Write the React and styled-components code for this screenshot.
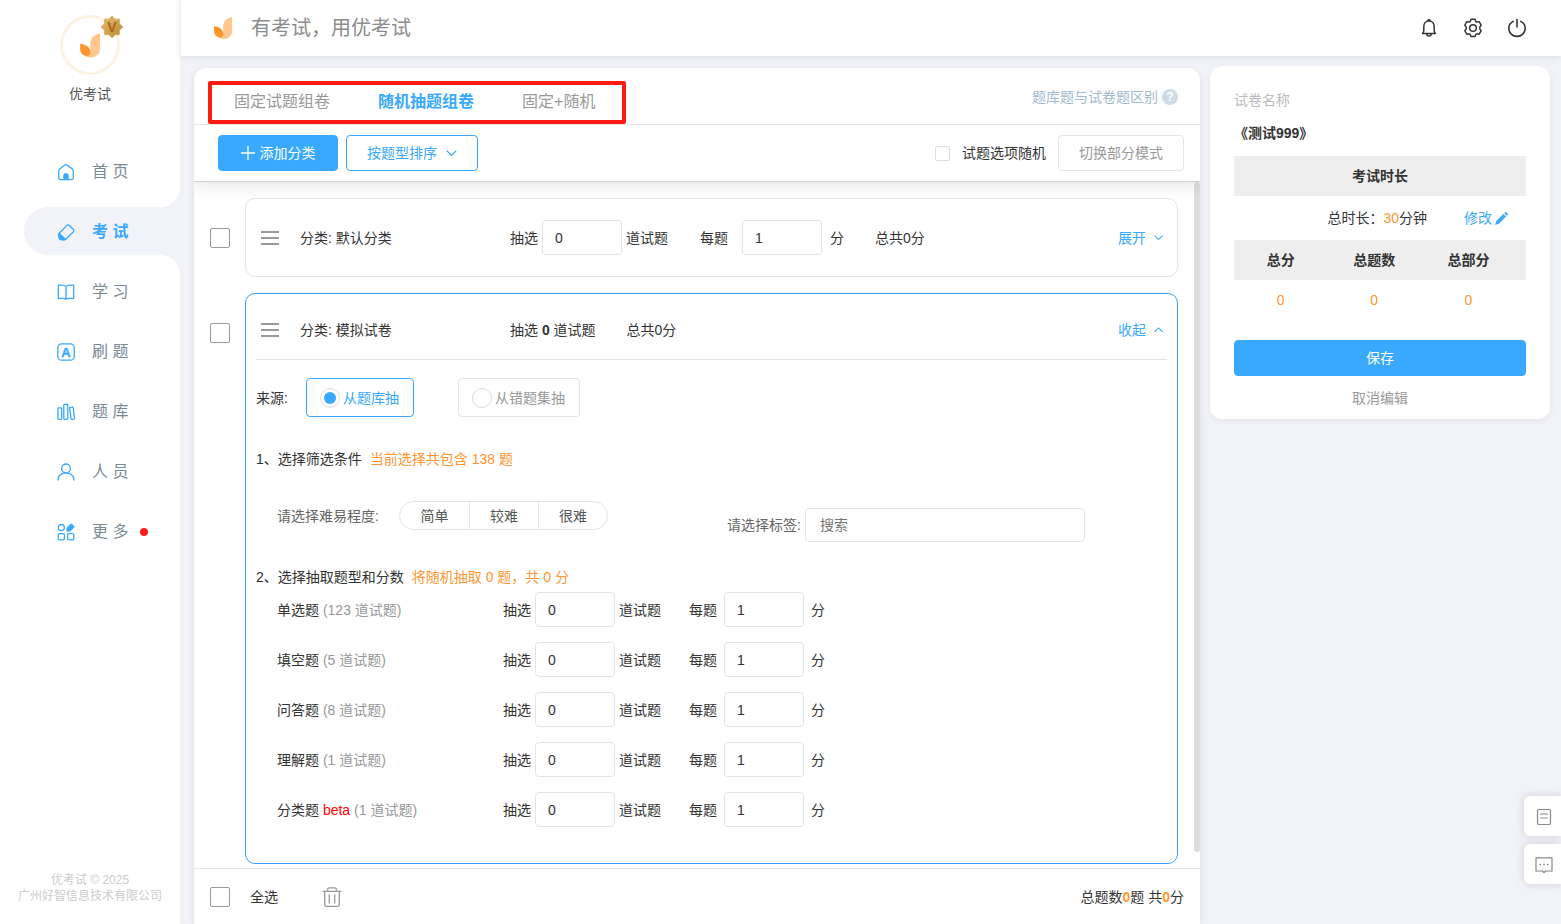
import { useState } from "react";
import styled, { createGlobalStyle, css } from "styled-components";

const GlobalStyle = createGlobalStyle`
  * {
    box-sizing: border-box;
  }

  body {
    margin: 0;
    background-color: #f2f3f8;
    color: #333;
    font-family: "Liberation Sans", "Noto Sans CJK SC", sans-serif;
    font-size: 14px;
    line-height: 20px;
  }

  button,
  input {
    font: inherit;
  }

  button {
    padding: 0;
    border: 0;
    background: none;
    cursor: pointer;
  }

  a {
    text-decoration: none;
  }

  svg {
    display: block;
    flex-shrink: 0;
  }
`;

const Page = styled.div`
  display: grid;
  grid-template-columns: 180px minmax(0, 1fr);
  height: 100vh;
`;

/* sidebar */

const Sidebar = styled.aside`
  display: flex;
  flex-direction: column;
  background-color: #fff;
`;

const Profile = styled.div`
  display: flex;
  flex-direction: column;
  align-items: center;
  gap: 9px;
  padding-top: 15px;
  color: #555;
`;

const Avatar = styled.div`
  position: relative;
  display: flex;
  align-items: center;
  justify-content: center;
  width: 60px;
  height: 60px;
  border: 3px solid #fbf3e4;
  border-radius: 50%;
`;

const Badge = styled.div`
  position: absolute;
  top: -3px;
  right: -7px;
`;

const Nav = styled.nav`
  display: flex;
  flex-direction: column;
  gap: 12px;
  margin-top: 43px;
`;

const NavItem = styled.a`
  position: relative;
  display: flex;
  align-items: center;
  gap: 17px;
  height: 48px;
  margin-left: 24px;
  padding: 2px 0 0 33px;
  border-radius: 24px 0 0 24px;
  color: #7b8a99;
  font-size: 16px;

  ${({ $active }) =>
    $active &&
    css`
      background-color: #f2f3f8;
      color: #38a9ff;
      font-weight: 700;

      &::before,
      &::after {
        content: "";
        position: absolute;
        right: 0;
        width: 20px;
        height: 20px;
      }

      &::before {
        bottom: 100%;
        background: radial-gradient(circle at 0 0, #fff 20px, #f2f3f8 20px);
      }

      &::after {
        top: 100%;
        background: radial-gradient(circle at 0 100%, #fff 20px, #f2f3f8 20px);
      }
    `}
`;

const NavIcon = styled.span`
  color: #38a9ff;
`;

const Dot = styled.span`
  width: 8px;
  height: 8px;
  margin-left: -5px;
  border-radius: 50%;
  background-color: #ff1a1a;
`;

const Copyright = styled.footer`
  margin-top: auto;
  padding-bottom: 20px;
  color: #ccc;
  font-size: 12px;
  line-height: 16px;
  text-align: center;
`;

/* top bar */

const Main = styled.div`
  display: flex;
  flex-direction: column;
  min-height: 0;
`;

const Header = styled.header`
  display: flex;
  align-items: center;
  height: 56px;
  flex-shrink: 0;
  padding: 0 34px 0 32px;
  border-left: 1px solid #ebecf2;
  background-color: #fff;
  box-shadow: 0 1px 6px rgba(60, 60, 100, 0.12);
`;

const Slogan = styled.h1`
  flex: 1;
  margin: 0 0 0 18px;
  color: #8c8c8c;
  font-size: 20px;
  font-weight: 400;
  line-height: 28px;
`;

const HeaderActions = styled.div`
  display: flex;
  gap: 24px;
`;

const IconButton = styled.button`
  display: flex;
  align-items: center;
  justify-content: center;
  color: ${({ $muted }) => ($muted ? "#999" : "#333")};
`;

const Content = styled.main`
  display: grid;
  grid-template-columns: minmax(0, 1fr) 340px;
  gap: 10px;
  flex: 1;
  min-height: 0;
  padding: 12px 11px 0 14px;
`;

/* question panel */

const Panel = styled.section`
  display: flex;
  flex-direction: column;
  min-height: 0;
  border-radius: 12px 12px 0 0;
  background-color: #fff;
  box-shadow: 0 2px 6px rgba(60, 60, 100, 0.12);
`;

const TabBar = styled.div`
  display: flex;
  align-items: flex-end;
  justify-content: space-between;
  height: 57px;
  flex-shrink: 0;
  padding: 0 22px 0 14px;
  border-bottom: 1px solid #e4e4e4;
`;

const Tabs = styled.div`
  display: flex;
  align-items: center;
  gap: 48px;
  height: 43px;
  padding: 0 27px 2px 22px;
  border: 4px solid #ff1a12;
  border-radius: 2px;
`;

const Tab = styled.button`
  color: ${({ $active }) => ($active ? "#38a9ff" : "#999")};
  font-size: 16px;
  font-weight: ${({ $active }) => ($active ? 700 : 400)};
`;

const HelpLink = styled.a`
  display: flex;
  align-items: center;
  gap: 4px;
  margin-bottom: 17px;
  color: #a1bad0;
`;

const Toolbar = styled.div`
  position: relative;
  display: flex;
  align-items: center;
  gap: 8px;
  height: 57px;
  flex-shrink: 0;
  padding: 0 16px 0 24px;
  border-bottom: 1px solid #d2d2d2;
  box-shadow: 0 4px 14px rgba(0, 0, 0, 0.1);
  clip-path: inset(0 0 -20px 0);
`;

const buttonColors = {
  primary: css`
    border-color: #38a9ff;
    background-color: #38a9ff;
    color: #fff;
  `,
  outline: css`
    border-color: #38a9ff;
    color: #38a9ff;
  `,
  plain: css`
    border-color: #e4e4e4;
    color: #999;
  `,
};

const Button = styled.button`
  display: flex;
  align-items: center;
  justify-content: center;
  gap: ${({ $gap }) => $gap || 0}px;
  width: ${({ $width }) => $width || "auto"};
  height: 36px;
  padding: 0 20px;
  border: 1px solid;
  border-radius: 4px;
  white-space: nowrap;
  ${({ $kind }) => buttonColors[$kind]}
`;

const RandomOption = styled.label`
  display: flex;
  align-items: center;
  gap: 12px;
  margin: 0 4px 0 auto;
`;

const Checkbox = styled.input.attrs({ type: "checkbox" })`
  appearance: none;
  width: ${({ $small }) => ($small ? 15 : 20)}px;
  height: ${({ $small }) => ($small ? 15 : 20)}px;
  flex-shrink: 0;
  margin: 0;
  border: 1px solid ${({ $small }) => ($small ? "#ddd" : "#999")};
  border-radius: 2px;
  background-color: #fff;

  &:checked {
    border-color: #38a9ff;
    background-color: #38a9ff;
  }
`;

const ListArea = styled.div`
  display: grid;
  grid-template-columns: minmax(0, 1fr) 6px;
  flex: 1;
  min-height: 0;
`;

const List = styled.div`
  display: flex;
  flex-direction: column;
  gap: 16px;
  overflow-y: auto;
  scrollbar-width: none;
  padding: 16px 16px 0;
`;

const ScrollThumb = styled.div`
  margin-bottom: 16px;
  border-radius: 3px;
  background-color: #dcdde0;
`;

const Entry = styled.div`
  display: grid;
  grid-template-columns: 20px minmax(0, 1fr);
  gap: 15px;

  > input {
    margin-top: 30px;
  }
`;

const Card = styled.div`
  padding: 0 10px;
  border: 1px solid ${({ $open }) => ($open ? "#38a1f3" : "#e4e4e4")};
  border-radius: 10px;
`;

const CardHeader = styled.div`
  display: flex;
  align-items: center;
  height: ${({ $open }) => ($open ? 66 : 77)}px;
  padding: ${({ $open }) => ($open ? "7px 4px 0 5px" : "0 4px 0 5px")};
  border-bottom: ${({ $open }) => ($open ? "1px solid #e4e4e4" : "0")};
`;

const CardName = styled.div`
  width: 210px;
  margin-left: 21px;
`;

const Summary = styled.div`
  display: flex;
  gap: 31px;
`;

const CardTotal = styled.span`
  margin-left: 31px;
`;

const Toggle = styled.button`
  display: flex;
  align-items: center;
  gap: 8px;
  margin-left: auto;
  color: #38a9ff;
`;

const FieldGroup = styled.label`
  display: flex;
  align-items: center;
  gap: ${({ $gap }) => $gap}px;
  margin-right: ${({ $after }) => $after}px;
`;

const NumberInput = styled.input`
  width: 80px;
  height: 35px;
  padding: 0 12px;
  border: 1px solid #e4e4e4;
  border-radius: 4px;
  background-color: #fff;
  color: #333;
`;

const SourceRow = styled.div`
  display: flex;
  align-items: center;
  margin-top: 18px;
`;

const SourceOptions = styled.div`
  display: flex;
  gap: 44px;
  margin-left: 18px;
`;

const SourceOption = styled.label`
  display: flex;
  align-items: center;
  gap: 3px;
  height: 39px;
  padding: 0 14px 0 13px;
  border: 1px solid ${({ $active }) => ($active ? "#38a9ff" : "#e4e4e4")};
  border-radius: 4px;
  color: ${({ $active }) => ($active ? "#38a9ff" : "#999")};
`;

const Radio = styled.input.attrs({ type: "radio" })`
  appearance: none;
  display: grid;
  place-content: center;
  width: 20px;
  height: 20px;
  margin: 0;
  border: 1px solid #ddd;
  border-radius: 50%;

  &:checked::before {
    content: "";
    width: 12px;
    height: 12px;
    border-radius: 50%;
    background-color: #38a9ff;
  }
`;

const StepTitle = styled.h2`
  margin: ${({ $top }) => $top}px 0 0;
  font-size: 14px;
  font-weight: 400;
  line-height: 20px;
`;

const Note = styled.span`
  margin-left: 8px;
  color: #ff9632;
`;

const Filters = styled.div`
  display: flex;
  align-items: flex-start;
  margin-top: 32px;
  padding-left: 21px;
  color: #666;
`;

const Difficulty = styled.div`
  display: flex;
  align-items: center;
  gap: 20px;
  width: 450px;
`;

const Segments = styled.div`
  display: flex;
  border: 1px solid #e4e4e4;
  border-radius: 15px;
`;

const Segment = styled.button`
  width: 69px;
  height: 27px;
  color: #555;

  & + & {
    border-left: 1px solid #e4e4e4;
  }
`;

const TagField = styled.label`
  display: flex;
  align-items: center;
  gap: 4px;
  margin-top: 7px;
`;

const TagInput = styled.input`
  width: 280px;
  height: 34px;
  padding: 0 14px;
  border: 1px solid #e4e4e4;
  border-radius: 4px;

  &::placeholder {
    color: #757575;
  }
`;

const TypeList = styled.div`
  display: flex;
  flex-direction: column;
  gap: 15px;
  margin-top: 5px;
  padding: 0 0 36px 21px;
`;

const TypeRow = styled.div`
  display: flex;
  align-items: center;
`;

const TypeName = styled.div`
  width: 226px;
`;

const Count = styled.span`
  color: #999;
`;

const Beta = styled.span`
  color: #f00;
`;

const PanelFooter = styled.footer`
  display: flex;
  align-items: center;
  height: 56px;
  flex-shrink: 0;
  padding: 0 16px;
  border-top: 1px solid #e4e4e4;
`;

const SelectAll = styled.label`
  display: flex;
  align-items: center;
  gap: 20px;
  margin-right: 44px;
`;

const Totals = styled.div`
  margin-left: auto;
`;

const Highlight = styled.span`
  color: #ff9632;
  font-weight: ${({ $bold }) => ($bold ? 700 : 400)};
`;

/* paper info */

const PaperCard = styled.aside`
  align-self: start;
  margin-top: -2px;
  padding: 24px 24px 11px;
  border-radius: 12px;
  background-color: #fff;
  box-shadow: 0 2px 6px rgba(60, 60, 100, 0.08);
`;

const Caption = styled.div`
  color: #bbb;
`;

const PaperName = styled.div`
  margin: 13px 0;
  font-weight: 700;
`;

const BlockTitle = styled.div`
  background-color: #eee;
  font-weight: 700;
  line-height: 40px;
  text-align: center;
`;

const Duration = styled.div`
  display: flex;
  align-items: center;
  justify-content: flex-end;
  gap: 37px;
  height: 44px;
  padding-right: 18px;
`;

const EditLink = styled.button`
  display: flex;
  align-items: center;
  gap: 3px;
  color: #38a9ff;
`;

const Stats = styled.table`
  width: 100%;
  table-layout: fixed;
  border-collapse: collapse;

  th,
  td {
    height: 40px;
    padding: 0;
    text-align: center;
  }

  th {
    background-color: #eee;
  }

  td {
    color: #ff9632;
  }

  th:last-child,
  td:last-child {
    width: 36%;
    padding-right: 10px;
  }
`;

const SaveButton = styled(Button)`
  width: 100%;
  margin: 20px 0 12px;
`;

const CancelButton = styled.button`
  width: 100%;
  color: #999;
  line-height: 20px;
`;

const FloatingTools = styled.div`
  position: fixed;
  right: 0;
  bottom: 40px;
  display: flex;
  flex-direction: column;
  gap: 8px;
`;

const FloatingButton = styled.button`
  display: flex;
  align-items: center;
  justify-content: center;
  width: 37px;
  height: 40px;
  padding: 2px 0 0 3px;
  border-radius: 6px 0 0 6px;
  background-color: #fff;
  color: #888;
  box-shadow: 0 0 10px rgba(0, 0, 0, 0.15);
`;

/* icons */

const Logo = ({ width = 20, height = 24 }) => (
  <svg width={width} height={height} viewBox="0 0 20 24">
    <path
      d="M19.2 1C13.6 2 10.3 5 10.3 10.2V17.5L4.6 20.6C6 22.2 8 23 10.3 23C15.5 23 19.2 19.6 19.2 14.5Z"
      fill="#ffc68e"
    />
    <path
      d="M1 10.3C6.6 10.6 10.4 14.2 10.4 18.2C10.4 20.2 9 21.4 7 21.4C3.4 21.4 1 18.6 1 14.8Z"
      fill="#ff962a"
    />
  </svg>
);

const Medal = () => (
  <svg width="24" height="24" viewBox="0 0 24 24">
    <defs>
      <linearGradient id="gold" x1="0" y1="0" x2="1" y2="1">
        <stop offset="0" stopColor="#e6bf7c" />
        <stop offset="1" stopColor="#bb842c" />
      </linearGradient>
    </defs>
    <path
      d="M12 1L15 4.2L19.6 4L19.6 8.8L23 12L19.6 15.2L19.6 19.8L15 19.8L12 23L9 19.8L4.4 19.8L4.4 15.2L1 12L4.4 8.8L4.4 4L9 4.2Z"
      fill="url(#gold)"
      stroke="#dcb66e"
    />
    <text
      x="12"
      y="17"
      textAnchor="middle"
      fontSize="14"
      fontWeight="700"
      fill="#a8660c"
    >
      V
    </text>
  </svg>
);

const LineIcon = ({ size = 18, children, stroke = 1.3 }) => (
  <svg
    width={size}
    height={size}
    viewBox={`0 0 ${size} ${size}`}
    fill="none"
    stroke="currentColor"
    strokeWidth={stroke}
    strokeLinecap="round"
    strokeLinejoin="round"
  >
    {children}
  </svg>
);

const navIcons = {
  home: (
    <>
      <path d="M1.7 8C1.7 7.1 2 6.5 2.7 5.9L7.8 2.1C8.5 1.6 9.3 1.6 10 2.1L15.3 5.9C16 6.5 16.3 7.1 16.3 8V14.8C16.3 16 15.7 16.6 14.5 16.6H3.5C2.3 16.6 1.7 16 1.7 14.8Z" />
      <path
        d="M6.3 16.6V12.8C6.3 9 11.7 9 11.7 12.8V16.6Z"
        fill="currentColor"
        stroke="none"
      />
    </>
  ),
  exam: (
    <>
      <path d="M9.6 2.6C10.4 1.7 11.6 1.7 12.4 2.5L16.2 6.2C17 7 17 8.1 16.2 9L9 16C8.2 16.8 7 16.8 5.6 16.6L3.4 16.2C2.5 16 2.3 15.4 2.2 14.4L1.8 12C1.7 11.2 1.9 10.6 2.5 10Z" />
      <path
        d="M2.2 10.4L8.6 16.4C7 17.1 4.8 16.9 3.2 16.4C2.2 16 1.4 12.2 2.2 10.4Z"
        fill="currentColor"
      />
    </>
  ),
  book: (
    <path d="M9 3.6C8 2.6 6.6 2.2 5 2.2H1.3V15.4H6.2C7.4 15.4 8.2 15.6 9 16.4C9.8 15.6 10.6 15.4 11.8 15.4H16.7V2.2H13C11.4 2.2 10 2.6 9 3.6ZM9 3.6V16.2" />
  ),
  practice: (
    <>
      <rect x="0.8" y="0.8" width="16.4" height="16.4" rx="3.8" />
      <text
        x="9"
        y="13.6"
        textAnchor="middle"
        fontSize="13"
        fontWeight="700"
        fill="currentColor"
        strokeWidth="0.4"
      >
        A
      </text>
    </>
  ),
  library: (
    <>
      <rect x="0.9" y="4.8" width="3.8" height="11.6" rx="0.8" />
      <rect x="6.8" y="1.4" width="4" height="15" rx="0.8" />
      <path d="M13 4.6L15.6 4.2C16 4.2 16.2 4.4 16.3 4.8L17.4 15.2C17.4 15.8 17.2 16 16.8 16.1L15 16.4C14.4 16.4 14.2 16.2 14.1 15.8L12.6 5.4C12.5 5 12.7 4.7 13 4.6Z" />
    </>
  ),
  people: (
    <>
      <circle cx="9" cy="5.4" r="4.4" />
      <path d="M1 17C1.4 12.4 4.6 9.9 9 9.9S16.6 12.4 17 17" />
    </>
  ),
  more: (
    <>
      <circle cx="4.3" cy="4.6" r="3.1" />
      <rect x="1.2" y="10.6" width="6.2" height="6.2" rx="1" />
      <rect x="10.6" y="10.6" width="6.2" height="6.2" rx="1" />
      <path
        d="M14.2 1.2L17 3.8L13.2 7.6C12.2 8.4 11.2 8.4 10.2 8C9.8 6.6 10 5.4 10.6 4.8Z"
        fill="currentColor"
      />
    </>
  ),
};

const BellIcon = () => (
  <LineIcon size={20} stroke={1.5}>
    <path d="M3.6 15.6H16.4C15.4 14.6 15.2 13.6 15.2 12V8.6C15.2 5.2 13 3 10 3S4.8 5.2 4.8 8.6V12C4.8 13.6 4.6 14.6 3.6 15.6ZM8.8 2.6C8.8 1.4 11.2 1.4 11.2 2.6M7.8 15.8C7.8 18.8 12.2 18.8 12.2 15.8" />
  </LineIcon>
);

const GearIcon = () => (
  <LineIcon size={20} stroke={1.5}>
    <path d="M8.4 1.3H11.6C12 1.3 12.3 1.6 12.3 2C12.3 3.7 13.9 4.6 15.3 3.8C15.7 3.5 16.2 3.7 16.4 4L18 6.8C18.2 7.2 18.1 7.6 17.7 7.8C16.3 8.7 16.3 11.1 17.7 12C18.1 12.2 18.2 12.7 18 13L16.4 15.8C16.2 16.2 15.7 16.3 15.3 16.1C13.9 15.3 12.3 16.2 12.3 17.9C12.3 18.3 12 18.6 11.6 18.6H8.4C8 18.6 7.7 18.3 7.7 17.9C7.7 16.2 6.1 15.3 4.7 16.1C4.3 16.3 3.8 16.2 3.6 15.8L2 13C1.8 12.7 1.9 12.2 2.3 12C3.7 11.1 3.7 8.7 2.3 7.8C1.9 7.6 1.8 7.2 2 6.8L3.6 4C3.8 3.7 4.3 3.5 4.7 3.8C6.1 4.6 7.7 3.7 7.7 2C7.7 1.6 8 1.3 8.4 1.3Z" />
    <circle cx="10" cy="10" r="3.3" />
  </LineIcon>
);

const PowerIcon = () => (
  <LineIcon size={20} stroke={1.6}>
    <path d="M10 1.6V9M6.2 3.4C3.4 4.8 1.8 7.4 1.8 10.3C1.8 14.9 5.4 18.4 10 18.4S18.2 14.9 18.2 10.3C18.2 7.4 16.6 4.8 13.8 3.4" />
  </LineIcon>
);

const PlusIcon = () => (
  <svg width="14" height="14" viewBox="0 0 14 14">
    <path d="M7 0V14M0 7H14" stroke="currentColor" strokeWidth="1.3" />
  </svg>
);

const Chevron = ({ width = 9, up }) => (
  <svg
    width={width}
    height={width / 2 + 1}
    viewBox="0 0 10 6"
    fill="none"
    stroke="currentColor"
    strokeWidth="1.2"
  >
    <path d={up ? "M0.6 5.4L5 1L9.4 5.4" : "M0.6 0.6L5 5L9.4 0.6"} />
  </svg>
);

const QuestionIcon = () => (
  <svg width="16" height="16" viewBox="0 0 16 16">
    <circle cx="8" cy="8" r="8" fill="#cddbe6" />
    <text
      x="8"
      y="12"
      textAnchor="middle"
      fontSize="12"
      fontWeight="700"
      fill="#fff"
    >
      ?
    </text>
  </svg>
);

const DragIcon = () => (
  <svg width="18" height="16" viewBox="0 0 18 16">
    <path d="M0 2H18M0 8H18M0 14H18" stroke="#999" strokeWidth="2" />
  </svg>
);

const TrashIcon = () => (
  <svg
    width="20"
    height="20"
    viewBox="0 0 20 20"
    fill="none"
    stroke="currentColor"
    strokeWidth="1.3"
  >
    <path d="M0.4 4.3H19.6M5.6 4V2.2C5.6 1.2 6 0.8 7 0.8H13C14 0.8 14.4 1.2 14.4 2.2V4M2.7 4.6V17.4C2.7 18.8 3.3 19.4 4.7 19.4H15.3C16.7 19.4 17.3 18.8 17.3 17.4V4.6M7.3 7.6V16.4M12.7 7.6V16.4" />
  </svg>
);

const PencilIcon = () => (
  <svg width="13" height="13" viewBox="0 0 13 13" fill="currentColor">
    <path d="M9.2 1.2L10 0.5C10.5 0 11.2 0 11.7 0.5L12.5 1.3C13 1.8 13 2.5 12.5 3L11.8 3.8ZM8.5 1.9L11.1 4.5L4.2 11.5L0 13L1.5 8.8Z" />
  </svg>
);

const NoteIcon = () => (
  <LineIcon stroke={1.2}>
    <rect x="2.5" y="1.5" width="13" height="15" rx="1.6" />
    <path d="M5.6 6H12.4M5.6 10H12.4" />
  </LineIcon>
);

const ChatIcon = () => (
  <LineIcon stroke={1.2}>
    <path d="M1 1.8H17V15H10.6L9 16.6L7.4 15H1Z" />
    <path d="M5.2 8.5H5.4M8.9 8.5H9.1M12.6 8.5H12.8" strokeWidth="1.6" />
  </LineIcon>
);

const navItems = [
  { icon: "home", label: "首 页" },
  { icon: "exam", label: "考 试" },
  { icon: "book", label: "学 习" },
  { icon: "practice", label: "刷 题" },
  { icon: "library", label: "题 库" },
  { icon: "people", label: "人 员" },
  { icon: "more", label: "更 多", dot: true },
];

const tabs = ["固定试题组卷", "随机抽题组卷", "固定+随机"];
const sources = ["从题库抽", "从错题集抽"];
const difficulties = ["简单", "较难", "很难"];

const questionTypes = [
  { name: "单选题", count: 123 },
  { name: "填空题", count: 5 },
  { name: "问答题", count: 8 },
  { name: "理解题", count: 1 },
  { name: "分类题", count: 1, beta: true },
];

function DrawFields({ between, scoreGap, unitGap }) {
  const [amount, setAmount] = useState("0");
  const [score, setScore] = useState("1");

  return (
    <>
      <FieldGroup $gap={4} $after={between}>
        抽选
        <NumberInput
          value={amount}
          onChange={(e) => setAmount(e.target.value)}
        />
        道试题
      </FieldGroup>
      <FieldGroup $gap={scoreGap} $after={unitGap}>
        每题
        <NumberInput value={score} onChange={(e) => setScore(e.target.value)} />
      </FieldGroup>
      <span>分</span>
    </>
  );
}

export default function App() {
  const [activeTab, setActiveTab] = useState(tabs[1]);
  const [source, setSource] = useState(sources[0]);

  return (
    <>
      <GlobalStyle />
      <Page>
        <Sidebar>
          <Profile>
            <Avatar>
              <Logo width={22} height={27} />
              <Badge>
                <Medal />
              </Badge>
            </Avatar>
            优考试
          </Profile>
          <Nav>
            {navItems.map((item) => (
              <NavItem
                key={item.icon}
                href={`#${item.icon}`}
                $active={item.icon === "exam"}
              >
                <NavIcon>
                  <LineIcon>{navIcons[item.icon]}</LineIcon>
                </NavIcon>
                {item.label}
                {item.dot && <Dot />}
              </NavItem>
            ))}
          </Nav>
          <Copyright>
            优考试 © 2025
            <br />
            广州好智信息技术有限公司
          </Copyright>
        </Sidebar>

        <Main>
          <Header>
            <Logo />
            <Slogan>有考试，用优考试</Slogan>
            <HeaderActions>
              <IconButton aria-label="消息">
                <BellIcon />
              </IconButton>
              <IconButton aria-label="设置">
                <GearIcon />
              </IconButton>
              <IconButton aria-label="退出">
                <PowerIcon />
              </IconButton>
            </HeaderActions>
          </Header>

          <Content>
            <Panel>
              <TabBar>
                <Tabs>
                  {tabs.map((tab) => (
                    <Tab
                      key={tab}
                      $active={tab === activeTab}
                      onClick={() => setActiveTab(tab)}
                    >
                      {tab}
                    </Tab>
                  ))}
                </Tabs>
                <HelpLink href="#help">
                  题库题与试卷题区别
                  <QuestionIcon />
                </HelpLink>
              </TabBar>

              <Toolbar>
                <Button $kind="primary" $width="120px" $gap={5}>
                  <PlusIcon />
                  添加分类
                </Button>
                <Button $kind="outline" $width="132px" $gap={9}>
                  按题型排序
                  <Chevron width={11} />
                </Button>
                <RandomOption>
                  <Checkbox $small />
                  试题选项随机
                </RandomOption>
                <Button $kind="plain">切换部分模式</Button>
              </Toolbar>

              <ListArea>
                <List>
                  <Entry>
                    <Checkbox aria-label="默认分类" />
                    <Card>
                      <CardHeader>
                        <DragIcon />
                        <CardName>分类: 默认分类</CardName>
                        <DrawFields between={32} scoreGap={14} unitGap={8} />
                        <CardTotal>总共0分</CardTotal>
                        <Toggle>
                          展开
                          <Chevron />
                        </Toggle>
                      </CardHeader>
                    </Card>
                  </Entry>

                  <Entry>
                    <Checkbox aria-label="模拟试卷" />
                    <Card $open>
                      <CardHeader $open>
                        <DragIcon />
                        <CardName>分类: 模拟试卷</CardName>
                        <Summary>
                          <span>
                            抽选 <b>0</b> 道试题
                          </span>
                          <span>总共0分</span>
                        </Summary>
                        <Toggle>
                          收起
                          <Chevron up />
                        </Toggle>
                      </CardHeader>

                      <SourceRow>
                        来源:
                        <SourceOptions>
                          {sources.map((item) => (
                            <SourceOption key={item} $active={item === source}>
                              <Radio
                                name="source"
                                checked={item === source}
                                onChange={() => setSource(item)}
                              />
                              {item}
                            </SourceOption>
                          ))}
                        </SourceOptions>
                      </SourceRow>

                      <StepTitle $top={32}>
                        1、选择筛选条件
                        <Note>当前选择共包含 138 题</Note>
                      </StepTitle>
                      <Filters>
                        <Difficulty>
                          请选择难易程度:
                          <Segments>
                            {difficulties.map((item) => (
                              <Segment key={item}>{item}</Segment>
                            ))}
                          </Segments>
                        </Difficulty>
                        <TagField>
                          请选择标签:
                          <TagInput placeholder="搜索" />
                        </TagField>
                      </Filters>

                      <StepTitle $top={25}>
                        2、选择抽取题型和分数
                        <Note>将随机抽取 0 题，共 0 分</Note>
                      </StepTitle>
                      <TypeList>
                        {questionTypes.map((type) => (
                          <TypeRow key={type.name}>
                            <TypeName>
                              {type.name} {type.beta && <Beta>beta </Beta>}
                              <Count>({type.count} 道试题)</Count>
                            </TypeName>
                            <DrawFields between={28} scoreGap={7} unitGap={7} />
                          </TypeRow>
                        ))}
                      </TypeList>
                    </Card>
                  </Entry>
                </List>
                <ScrollThumb />
              </ListArea>

              <PanelFooter>
                <SelectAll>
                  <Checkbox />
                  全选
                </SelectAll>
                <IconButton $muted aria-label="删除">
                  <TrashIcon />
                </IconButton>
                <Totals>
                  总题数<Highlight $bold>0</Highlight>题 共
                  <Highlight $bold>0</Highlight>分
                </Totals>
              </PanelFooter>
            </Panel>

            <PaperCard>
              <Caption>试卷名称</Caption>
              <PaperName>《测试999》</PaperName>
              <BlockTitle>考试时长</BlockTitle>
              <Duration>
                <span>
                  总时长：<Highlight>30</Highlight>分钟
                </span>
                <EditLink>
                  修改
                  <PencilIcon />
                </EditLink>
              </Duration>
              <Stats>
                <thead>
                  <tr>
                    <th>总分</th>
                    <th>总题数</th>
                    <th>总部分</th>
                  </tr>
                </thead>
                <tbody>
                  <tr>
                    <td>0</td>
                    <td>0</td>
                    <td>0</td>
                  </tr>
                </tbody>
              </Stats>
              <SaveButton $kind="primary">保存</SaveButton>
              <CancelButton>取消编辑</CancelButton>
            </PaperCard>
          </Content>
        </Main>
      </Page>

      <FloatingTools>
        <FloatingButton aria-label="文档">
          <NoteIcon />
        </FloatingButton>
        <FloatingButton aria-label="反馈">
          <ChatIcon />
        </FloatingButton>
      </FloatingTools>
    </>
  );
}
